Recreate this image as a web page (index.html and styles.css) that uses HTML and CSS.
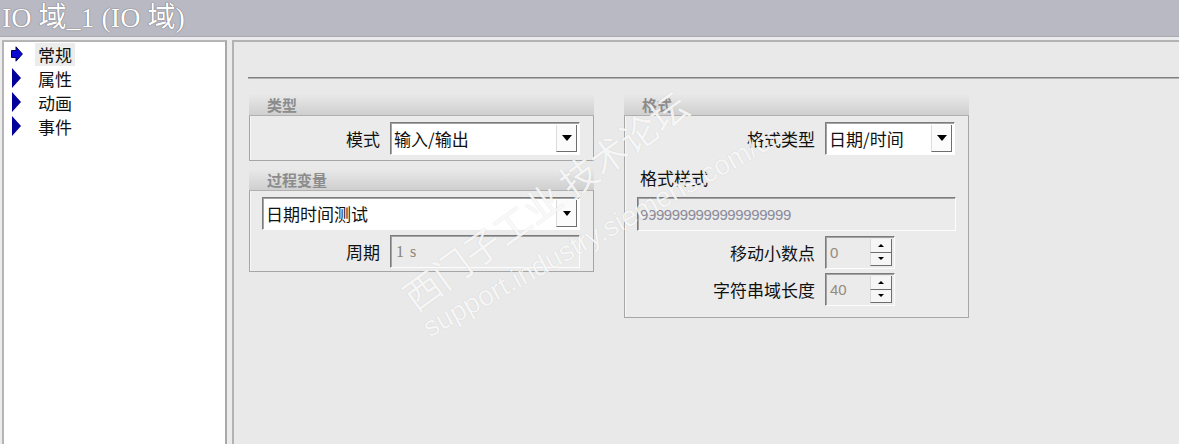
FILE: index.html
```html
<!DOCTYPE html>
<html lang="zh-CN">
<head>
    <meta charset="UTF-8">
    <title>IO 域_1 (IO 域)</title>
    <link rel="stylesheet" href="styles.css">
</head>
<body>
    <div class="title">IO 域_1 (IO 域)</div>
    <div class="main">
        <div class="tree">
            <div class="item">
                <svg class="icon" width="12" height="16" viewBox="0 0 12 16">
                    <path d="M0.5 4.5 H5 V0.8 L11.4 8 L5 15.2 V11.5 H0.5 Z" fill="#0a0ad0" stroke="#000050" stroke-width="1"/>
                </svg>
                <span class="label active">常规</span>
            </div>
            <div class="item">
                <svg class="icon" width="12" height="20" viewBox="0 0 12 20">
                    <path d="M1 0 L10 10 L1 20 Z" fill="#00009a"/>
                </svg>
                <span class="label">属性</span>
            </div>
            <div class="item">
                <svg class="icon" width="12" height="20" viewBox="0 0 12 20">
                    <path d="M1 0 L10 10 L1 20 Z" fill="#00009a"/>
                </svg>
                <span class="label">动画</span>
            </div>
            <div class="item">
                <svg class="icon" width="12" height="20" viewBox="0 0 12 20">
                    <path d="M1 0 L10 10 L1 20 Z" fill="#00009a"/>
                </svg>
                <span class="label">事件</span>
            </div>
        </div>

        <div class="editor">
            <div class="rule"></div>
            <div class="groups">
                <div class="col">
                    <div class="group">
                        <div class="group-head">类型</div>
                        <div class="group-body">
                            <div class="row">
                                <span class="field-label">模式</span>
                                <div class="combo w190">
                                    <span class="value">输入/输出</span>
                                    <span class="drop"></span>
                                </div>
                            </div>
                        </div>
                    </div>
                    <div class="group second">
                        <div class="group-head">过程变量</div>
                        <div class="group-body">
                            <div class="combo wide">
                                <span class="value">日期时间测试</span>
                                <span class="drop small"></span>
                            </div>
                            <div class="row gap5">
                                <span class="field-label">周期</span>
                                <div class="input w190"><span class="serif">1 s</span></div>
                            </div>
                        </div>
                    </div>
                </div>

                <div class="col">
                    <div class="group">
                        <div class="group-head">格式</div>
                        <div class="group-body tall">
                            <div class="row">
                                <span class="field-label w190l">格式类型</span>
                                <div class="combo w130">
                                    <span class="value">日期/时间</span>
                                    <span class="drop"></span>
                                </div>
                            </div>
                            <div class="plain-label">格式样式</div>
                            <div class="input pattern"><span>9999999999999999999</span></div>
                            <div class="row gap5">
                                <span class="field-label w190l">移动小数点</span>
                                <div class="spin">
                                    <span class="num">0</span>
                                    <span class="spin-btns"><span class="up"></span><span class="down"></span></span>
                                </div>
                            </div>
                            <div class="row gap4">
                                <span class="field-label w190l">字符串域长度</span>
                                <div class="spin">
                                    <span class="num">40</span>
                                    <span class="spin-btns"><span class="up"></span><span class="down"></span></span>
                                </div>
                            </div>
                        </div>
                    </div>
                </div>
            </div>

            <div class="watermark cn">西门子工业 技术论坛</div>
            <div class="watermark url">support.industry.siemens.com/cs</div>
        </div>
    </div>
</body>
</html>
```

FILE: styles.css
```css
body {
    margin: 0;
    padding: 0;
    width: 1179px;
    height: 444px;
    overflow: hidden;
    background-color: #e9e9e9;
    font-family: "Noto Sans CJK SC", "Noto Sans", sans-serif;
    font-size: 17px;
    color: #111;
}

.title {
    height: 36px;
    line-height: 36px;
    padding-left: 2px;
    background-color: #b9b9c3;
    border-bottom: 1px solid #aaaab3;
    color: #fff;
    font-family: "Liberation Serif", "Noto Sans CJK SC", serif;
    font-size: 28px;
    text-shadow: 0 0 1px #6a6a74, 0 0 1px #6a6a74;
}

.main {
    display: flex;
    gap: 5px;
    height: 407px;
    padding: 3px 0 0 2px;
    box-sizing: border-box;
    background-color: #ebebed;
}

/* left tree */
.tree {
    width: 225px;
    flex-shrink: 0;
    box-sizing: border-box;
    background-color: #fff;
    border: 2px solid #b5b5b5;
    border-bottom: none;
    border-right-color: #a9a9a9;
    padding-top: 0;
}

.item {
    display: flex;
    align-items: center;
    height: 24px;
    padding-left: 7px;
}

.icon {
    width: 12px;
    flex-shrink: 0;
}

.label {
    margin-left: 12px;
    padding: 0 3px;
    line-height: 23px;
}

.label.active {
    background-color: #ececec;
}

/* right editor */
.editor {
    flex: 1;
    position: relative;
    overflow: hidden;
    background-color: #e9e9e9;
    border-top: 2px solid #b2b2b2;
    border-left: 2px solid #b2b2b2;
}

.rule {
    margin: 35px 0 0 14px;
    height: 0;
    border-top: 1px solid #7f7f7f;
    border-bottom: 1px solid #b4b4b4;
}

.groups {
    display: flex;
    gap: 30px;
    margin: 15px 0 0 15px;
}

.col {
    width: 345px;
    display: flex;
    flex-direction: column;
}

.group.second {
    margin-top: 8px;
}

.group-head {
    height: 22px;
    line-height: 22px;
    padding-left: 18px;
    background: linear-gradient(#e9e9e9, #cfcfcf);
    border-bottom: 1px solid #b0b0b0;
    box-sizing: border-box;
    color: #8c8c8c;
    font-size: 15px;
    font-weight: bold;
}

.group-body {
    border: 1px solid #a6a6a6;
    border-top: none;
    box-shadow: inset 1px 0 0 #f7f7f7;
    padding: 6px 0 5px 0;
    background-color: #ebebeb;
}

.second .group-body {
    padding-bottom: 3px;
}

.group-body.tall {
    padding-bottom: 11px;
}

.row {
    display: flex;
    align-items: center;
}

.row.gap5 {
    margin-top: 5px;
}

.row.gap4 {
    margin-top: 4px;
}

.field-label {
    width: 130px;
    text-align: right;
    margin-right: 10px;
    flex-shrink: 0;
}

.field-label.w190l {
    width: 190px;
}

/* sunken fields */
.combo,
.input,
.spin {
    display: flex;
    align-items: center;
    height: 33px;
    box-sizing: border-box;
    border: 1px solid;
    border-color: #7c7c7c #fdfdfd #fdfdfd #7c7c7c;
    box-shadow: inset 1px 1px 0 #a3a3a3;
}

.combo {
    background-color: #fff;
    padding: 2px 2px 2px 3px;
}

.combo .value {
    flex: 1;
    white-space: nowrap;
}

.drop {
    width: 21px;
    height: 100%;
    box-sizing: border-box;
    border-left: 1px solid #dcdcdc;
    border-right: 1px solid #6e6e6e;
    border-bottom: 1px solid #6e6e6e;
    background-color: #fbfbfb;
    display: flex;
    align-items: center;
    justify-content: center;
}

.drop::after {
    content: "";
    border-left: 5px solid transparent;
    border-right: 5px solid transparent;
    border-top: 6px solid #000;
}

.drop.small::after {
    border-left-width: 4px;
    border-right-width: 4px;
    border-top-width: 5px;
}

.w190 {
    width: 190px;
}

.w130 {
    width: 130px;
}

.combo.wide {
    width: 318px;
    margin-left: 12px;
}

.input {
    background-color: #ebebeb;
    padding-left: 5px;
    color: #8c8273;
}

.serif {
    font-family: "Liberation Serif", serif;
    font-size: 16px;
    letter-spacing: 1px;
}

.plain-label {
    margin-top: 10px;
    height: 26px;
    line-height: 26px;
    padding-left: 15px;
}

.input.pattern {
    width: 319px;
    height: 34px;
    margin: 6px 0 0 12px;
    padding-left: 2px;
    font-family: "Liberation Sans", sans-serif;
    font-size: 15px;
    color: #8a8a98;
    letter-spacing: -0.4px;
}

.spin {
    width: 70px;
    background-color: #ebebeb;
    padding: 2px 2px 2px 4px;
    justify-content: space-between;
    font-family: "Liberation Sans", sans-serif;
    font-size: 15px;
    color: #968a7a;
}

.spin-btns {
    width: 22px;
    height: 100%;
    display: flex;
    flex-direction: column;
}

.spin-btns span {
    flex: 1;
    box-sizing: border-box;
    border-left: 1px solid #dadada;
    border-right: 1px solid #6e6e6e;
    border-bottom: 1px solid #6e6e6e;
    background-color: #f6f6f6;
    display: flex;
    align-items: center;
    justify-content: center;
}

.spin-btns .up::after {
    content: "";
    border-left: 3px solid transparent;
    border-right: 3px solid transparent;
    border-bottom: 3px solid #000;
}

.spin-btns .down::after {
    content: "";
    border-left: 3px solid transparent;
    border-right: 3px solid transparent;
    border-top: 3px solid #000;
}

/* watermark overlay */
.watermark {
    position: absolute;
    white-space: nowrap;
    color: rgba(255, 255, 255, 0.85);
    text-shadow: 0 0 1px rgba(0, 0, 0, 0.16);
    transform-origin: 0 100%;
    pointer-events: none;
}

.watermark.cn {
    left: 184px;
    top: 234px;
    font-size: 37px;
    line-height: 40px;
    transform: rotate(-36deg);
}

.watermark.url {
    left: 198px;
    top: 272px;
    font-family: "Liberation Sans", sans-serif;
    font-size: 28px;
    line-height: 28px;
    transform: rotate(-29deg);
}
```
